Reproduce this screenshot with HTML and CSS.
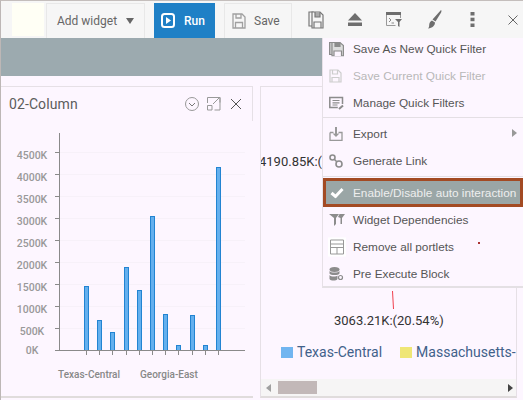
FILE: index.html
```html
<!DOCTYPE html>
<html lang="en">
<head>
    <meta charset="UTF-8">
    <title>Dashboard</title>
    <link rel="stylesheet" href="styles.css">
</head>
<body>
    <div class="toolbar">
        <div class="logo-box"></div>
        <div class="tool-btn add-widget">Add widget <span class="caret"></span></div>
        <div class="run-btn">
            <svg width="14" height="15" viewBox="0 0 14 15"><rect x="1" y="1" width="12" height="13" rx="2.500" fill="#1f80c6" stroke="#fff" stroke-width="2"/><path d="M5 4v7l5-3.500z" fill="#fff"/></svg>
            Run
        </div>
        <div class="tool-btn save-btn">
            <svg width="14" height="16" viewBox="0 0 14 16" fill="none" stroke="#a0a0a0" stroke-width="1.300"><path d="M1 1h9l3 3v11H1z"/><path d="M4 1v4h5V1M3.500 15V9.500h7V15"/></svg>
            Save
        </div>
        <div class="tool-icons">
            <svg width="16" height="18" viewBox="0 0 16 18" fill="none" stroke="#777" stroke-width="1.200"><path d="M1 1h4v14H1z"/><path d="M4 1h8l3 3v13H4z" fill="#f6f6f6"/><path d="M7 1v5h5V1" fill="#aaa"/><path d="M6 17v-6h7v6"/></svg>
            <svg width="14" height="13" viewBox="0 0 14 13" fill="#6e6e6e"><path d="M7 0l7 7.500H0z"/><rect y="9.500" width="14" height="3.500"/></svg>
            <svg width="16" height="15" viewBox="0 0 16 15"><path d="M0 0h15v3H0z" fill="#6e6e6e"/><path d="M.5 3v10.500h9M14.500 3v3" fill="none" stroke="#999"/><path d="M3 6l2 2-2 2M5.500 11H8" fill="none" stroke="#888"/><path d="M9 7h7l-2.500 3v5L12 14v-4z" fill="#6e6e6e"/></svg>
            <svg width="16" height="19" viewBox="0 0 16 19" fill="#6e6e6e"><path d="M15 0c.8.600.500 2-.5 3.500L9.500 11.500 6.500 9.500z"/><path d="M6 10.500l3 2c0 3-2.500 5.500-7 6 1.500-1.500 1-2.500 1.300-4.500C3.600 12 5 11 6 10.500z"/></svg>
            <svg class="dots-icon" width="5" height="15" viewBox="0 0 5 15" fill="#6e6e6e"><rect x=".5" width="4" height="3.500"/><rect x=".5" y="5.700" width="4" height="3.500"/><rect x=".5" y="11.500" width="4" height="3.500"/></svg>
            <svg class="close-icon" width="10" height="10" viewBox="0 0 10 10" stroke="#666"><path d="M.5.500l9 9M9.500.500l-9 9"/></svg>
        </div>
    </div>

    <div class="band"></div>

    <div class="portlets">
        <div class="portlet column-card">
            <div class="portlet-head">
                <span class="portlet-title">02-Column</span>
                <svg class="head-icons" width="56" height="14" viewBox="0 0 56 14" fill="none" stroke="#999">
                    <circle cx="7" cy="7" r="6.500"/><path d="M4 6l3 3 3-3" stroke="#777"/>
                    <path d="M22.500 6V.500h12.500V13h-5.500M22.500 8.500h4.500V13h-4.500zM28 7l6-6M30 .5h5v5"/>
                    <path d="M46 2l10 10M56 2L46 12" stroke="#555"/>
                </svg>
            </div>
            <svg class="column-chart" width="252" height="290" viewBox="0 0 252 290">
                <g stroke="#f7f1f9">
                    <path d="M59 52.500h186M59 74.500h186M59 96.500h186M59 118.500h186M59 140.500h186M59 162.500h186M59 184.500h186M59 206.500h186M59 228.500h186"/>
                </g>
                <g fill="#64b0ee" stroke="#2284d2">
                    <rect x="84.500" y="186.500" width="4" height="64"/>
                    <rect x="97.500" y="220.500" width="4" height="30"/>
                    <rect x="110.500" y="232.500" width="4" height="18"/>
                    <rect x="124.500" y="167.500" width="4" height="83"/>
                    <rect x="137.500" y="190.500" width="4" height="60"/>
                    <rect x="150.500" y="116.500" width="4" height="134"/>
                    <rect x="163.500" y="214.500" width="4" height="36"/>
                    <rect x="176.500" y="245.500" width="4" height="5"/>
                    <rect x="190.500" y="215.500" width="4" height="35"/>
                    <rect x="203.500" y="245.500" width="4" height="5"/>
                    <rect x="216.500" y="67.500" width="4" height="183"/>
                </g>
                <path d="M59.500 33v217M55 250.500h190M55 228.500h4M55 206.500h4M55 184.500h4M55 162.500h4M55 140.500h4M55 118.500h4M55 96.500h4M55 74.500h4M55 52.500h4M86.500 250v5M99.500 250v5M112.500 250v5M126.500 250v5M139.500 250v5M152.500 250v5M165.500 250v5M178.500 250v5M192.500 250v5M205.500 250v5M218.500 250v5" stroke="#8a8a8a" fill="none"/>
                <g class="y-labels" text-anchor="middle">
                    <text x="32" y="59">4500K</text>
                    <text x="32" y="81">4000K</text>
                    <text x="32" y="103">3500K</text>
                    <text x="32" y="125">3000K</text>
                    <text x="32" y="147">2500K</text>
                    <text x="32" y="169">2000K</text>
                    <text x="32" y="191">1500K</text>
                    <text x="32" y="213">1000K</text>
                    <text x="32" y="235">500K</text>
                    <text x="32" y="254">0K</text>
                </g>
                <g class="x-labels">
                    <text x="58" y="278">Texas-Central</text>
                    <text x="140" y="278">Georgia-East</text>
                </g>
            </svg>
        </div>

        <div class="portlet pie-card">
            <svg class="pie-labels" width="256" height="248" viewBox="0 0 256 248">
                <text x="-2" y="79">4190.85K:(</text>
                <path d="M131.500 204l1 18" stroke="#f0404e" fill="none"/>
                <text x="73" y="238">3063.21K:(20.54%)</text>
            </svg>
            <div class="legend">
                <span class="swatch blue"></span><span class="legend-name">Texas-Central</span>
                <span class="swatch yellow"></span><span class="legend-name">Massachusetts-</span>
            </div>
            <div class="scrollbar">
                <span class="arrow left"></span>
                <div class="scroll-track"><span class="scroll-thumb"></span></div>
                <span class="arrow right"></span>
            </div>
        </div>
    </div>

    <div class="menu">
        <div class="menu-item">
            <svg width="15" height="15" viewBox="0 0 15 15" fill="none" stroke="#8c8c8c" stroke-width="1.200"><path d="M.6 1h3v12h-3z" fill="#ccc"/><path d="M3 1h8l3.400 3v10.400H3z" fill="#ddd"/><path d="M6 1v4h5V1" fill="#8c8c8c"/><path d="M5 14.500v-5h7.500v5" fill="#fdf6ff"/></svg>
            <span>Save As New Quick Filter</span>
        </div>
        <div class="menu-item disabled">
            <svg width="13" height="14" viewBox="0 0 13 14" fill="none" stroke="#cdcdcd" stroke-width="1.200"><path d="M1 1h8l3 3v9H1z"/><path d="M3.500 1v4h5V1M3 13V8.500h7V13"/></svg>
            <span>Save Current Quick Filter</span>
        </div>
        <div class="menu-item">
            <svg width="15" height="14" viewBox="0 0 15 14" fill="none" stroke="#8c8c8c" stroke-width="1.200"><path d="M13.500 8V1.500H.8v10h8" stroke-width="1.500"/><path d="M3.500 4.500h7M3.500 6.800h7M3.500 9h5"/><path d="M10 13l4-3.500" stroke-width="2"/></svg>
            <span>Manage Quick Filters</span>
        </div>
        <div class="menu-sep first-sep"></div>
        <div class="menu-item">
            <svg width="14" height="14" viewBox="0 0 14 14" fill="none" stroke="#999" stroke-width="1.300"><path d="M1 5.500v7.800h12V5.500H9.500M4.500 5.500H1"/><path d="M7 0v9" stroke-width="2"/><path d="M4.500 6.500L7 9l2.500-2.500"/></svg>
            <span>Export</span>
            <span class="submenu-arrow"></span>
        </div>
        <div class="menu-item">
            <svg width="14" height="14" viewBox="0 0 14 14" fill="none" stroke="#8c8c8c" stroke-width="1.600"><circle cx="3.500" cy="3.500" r="2.500"/><circle cx="10" cy="10" r="3"/><path d="M5.500 5.500l2 2"/></svg>
            <span>Generate Link</span>
        </div>
        <div class="menu-sep"></div>
        <div class="menu-item active">
            <svg width="14" height="11" viewBox="0 0 14 11" fill="none" stroke="#fff" stroke-width="3"><path d="M1.500 5.500l4 3.500 7-7.500"/></svg>
            <span>Enable/Disable auto interaction</span>
        </div>
        <div class="menu-item">
            <svg width="16" height="12" viewBox="0 0 16 12" fill="#8c8c8c"><path d="M0 0h10L7 4v6L5 12V4z"/><path d="M10.500 0H16l-3 4v6h-1.500V4L9 3z"/></svg>
            <span>Widget Dependencies</span>
        </div>
        <div class="menu-item">
            <svg class="portlets-icon" width="18" height="19" viewBox="0 0 18 19" fill="none" stroke="#999"><path d="M2.500 2.500h13v14h-13zM2.500 6.500h13M2.500 10h13M9 10v6.500"/></svg>
            <span>Remove all portlets</span>
        </div>
        <div class="menu-item">
            <svg width="15" height="14" viewBox="0 0 15 14" fill="#8c8c8c"><ellipse cx="5.500" cy="2.500" rx="5" ry="2.500"/><path d="M.5 4c1 2 9 2 10 0v2.500c-1 2-9 2-10 0zM.5 8c1 2 7 2 8 .5V12c-1 2-7 2-8 0z"/><circle cx="11.500" cy="10.500" r="2" fill="none" stroke="#8c8c8c" stroke-width="1.200"/></svg>
            <span>Pre Execute Block</span>
        </div>
        <span class="stray-dot"></span>
    </div>
</body>
</html>
```
FILE: styles.css
```css
/* General */
body {
    margin: 0;
    width: 523px;
    height: 400px;
    overflow: hidden;
    position: relative;
    box-sizing: border-box;
    background-color: #fdf6ff;
    border-left: 1px solid #bdb7b6;
    border-top: 1px solid #c4bebc;
    font-family: Roboto, sans-serif;
    color: #555;
}

/* Toolbar */
.toolbar {
    display: flex;
    align-items: stretch;
    height: 37px;
    padding-left: 11px;
    background: #f6f6f6;
}

.logo-box {
    width: 32px;
    margin: 2px 2px 2px 0;
    background: #fffff5;
}

.tool-btn {
    display: flex;
    align-items: center;
    border: 1px solid #e8e8e8;
    border-bottom: none;
    margin-top: 2px;
    font-size: 12px;
    color: #666;
}

.add-widget {
    width: 99px;
    box-sizing: border-box;
    padding-left: 10px;
    gap: 9px;
}

.caret {
    width: 0;
    height: 0;
    border-left: 4.500px solid transparent;
    border-right: 4.500px solid transparent;
    border-top: 6px solid #666;
}

.run-btn {
    display: flex;
    align-items: center;
    gap: 9px;
    width: 61px;
    box-sizing: border-box;
    margin: 2px 0 0 9px;
    padding-left: 7px;
    background: #1f80c6;
    color: #fff;
    font-size: 12px;
    font-weight: 500;
}

.save-btn {
    width: 68px;
    box-sizing: border-box;
    margin-left: 9px;
    padding-left: 7px;
    gap: 8px;
}

.tool-icons {
    display: flex;
    align-items: center;
    gap: 24px;
    padding-left: 16px;
}

.dots-icon {
    margin-left: 4px;
}

.close-icon {
    margin-left: 9px;
}

/* Band */
.band {
    height: 38px;
    background: #9caaaf;
}

/* Portlets */
.portlets {
    display: flex;
    gap: 7px;
    padding-top: 10px;
}

.portlet {
    box-sizing: border-box;
    height: 312px;
    border-top: 1px solid #e6e0e6;
    border-bottom: 2px solid #e0dcdc;
}

.column-card {
    width: 252px;
}

.portlet-head {
    display: flex;
    align-items: center;
    justify-content: space-between;
    height: 34px;
    padding: 0 11px 0 8px;
    border-right: 1px solid #e6e0e6;
}

.portlet-title {
    font-size: 14px;
    letter-spacing: 0.100px;
    color: #5c5c5c;
}

.column-chart {
    display: block;
    margin: -21px 0 0 -1px;
}

.column-chart text {
    font-family: Roboto, sans-serif;
}

.y-labels text {
    font-size: 10.500px;
    font-weight: 500;
    fill: #999;
}

.x-labels text {
    font-size: 10px;
    font-weight: 500;
    fill: #888;
}

.pie-card {
    width: 257px;
    display: flex;
    flex-direction: column;
    border-left: 1px solid #e6e0e6;
    border-right: 1px solid #e6e0e6;
    overflow: hidden;
}

.pie-labels {
    display: block;
    flex: none;
    overflow: visible;
}

.pie-labels text {
    font-family: Roboto, sans-serif;
    font-size: 13px;
    fill: #333;
}

.legend {
    display: flex;
    align-items: center;
    height: 14px;
    margin-top: 10px;
    padding-left: 20px;
    white-space: nowrap;
    font-size: 14px;
    color: #41618a;
}

.swatch {
    flex: none;
    width: 12px;
    height: 11px;
    margin-right: 4px;
}

.swatch.blue {
    background: #71b5f0;
}

.swatch.yellow {
    background: #efe676;
}

.legend-name {
    margin-right: 18px;
}

.scrollbar {
    display: flex;
    align-items: center;
    height: 17px;
    margin-top: auto;
    background: #f6f5f5;
}

.scroll-track {
    flex: 1;
    height: 13px;
    margin: 0 8px 0 7px;
}

.scroll-thumb {
    display: block;
    width: 39px;
    height: 13px;
    background: #c2b8b8;
}

.arrow {
    width: 0;
    height: 0;
    border-top: 4px solid transparent;
    border-bottom: 4px solid transparent;
}

.arrow.left {
    margin-left: 5px;
    border-right: 5px solid #a0a0a0;
}

.arrow.right {
    margin-right: 3px;
    border-left: 5px solid #444;
}

/* Menu */
.menu {
    position: absolute;
    top: 37px;
    left: 321px;
    width: 201px;
    height: 250px;
    box-sizing: border-box;
    background: #fdf6ff;
    border-left: 1px solid #e6e0e6;
    border-bottom: 2px solid #e4e0e4;
    font-family: "Liberation Sans", Arial, sans-serif;
    font-size: 11.800px;
    color: #555;
}

.menu-item {
    display: flex;
    align-items: center;
    height: 27px;
    padding-left: 30px;
    position: relative;
}

.menu-item:first-child {
    margin-top: -3px;
}

.menu-item svg {
    position: absolute;
    left: 6px;
    top: 50%;
    transform: translateY(-50%);
}

.menu-item.disabled {
    color: #b8b8b8;
}

.menu-item.active {
    height: 29px;
    box-sizing: border-box;
    border: 3px solid #a34a23;
    padding-left: 27px;
    margin-bottom: -1px;
    background: #9aa6a6;
    color: #eee;
    white-space: nowrap;
}

.menu-item.active svg {
    left: 4px;
}

.portlets-icon {
    background: #fff;
}

.menu .portlets-icon {
    left: 5px;
}

.menu-sep {
    height: 1px;
    margin: 2px 0 1px;
    background: #e4dfe4;
}

.menu-sep.first-sep {
    margin: 1px 0 2px;
}

.submenu-arrow {
    position: absolute;
    right: 6px;
    top: 9px;
    width: 0;
    height: 0;
    border-top: 4px solid transparent;
    border-bottom: 4px solid transparent;
    border-left: 5px solid #999;
}

.stray-dot {
    position: absolute;
    left: 155px;
    top: 204px;
    width: 2px;
    height: 2px;
    background: #a33;
}
```
